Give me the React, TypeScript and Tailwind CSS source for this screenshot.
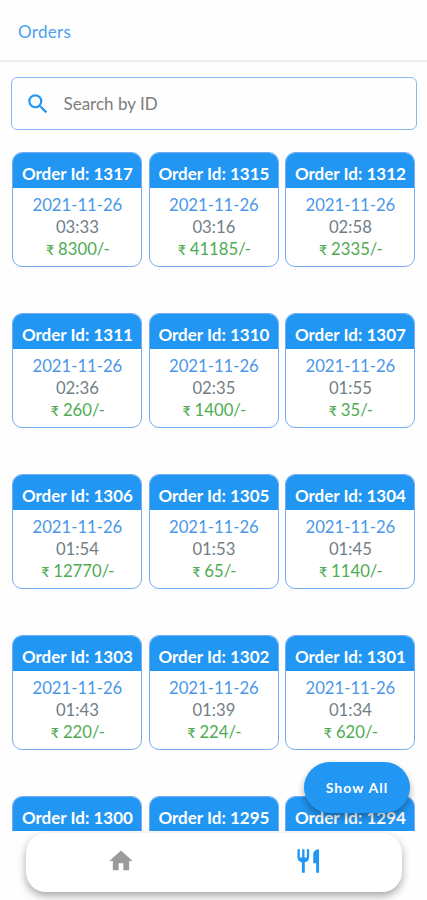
import React from "react";

type Order = { id: number; time?: string; amount?: number };

const orders: Order[] = [
  { id: 1317, time: "03:33", amount: 8300 },
  { id: 1315, time: "03:16", amount: 41185 },
  { id: 1312, time: "02:58", amount: 2335 },
  { id: 1311, time: "02:36", amount: 260 },
  { id: 1310, time: "02:35", amount: 1400 },
  { id: 1307, time: "01:55", amount: 35 },
  { id: 1306, time: "01:54", amount: 12770 },
  { id: 1305, time: "01:53", amount: 65 },
  { id: 1304, time: "01:45", amount: 1140 },
  { id: 1303, time: "01:43", amount: 220 },
  { id: 1302, time: "01:39", amount: 224 },
  { id: 1301, time: "01:34", amount: 620 },
  { id: 1300 },
  { id: 1295 },
  { id: 1294 },
];

function OrderCard({ order }: { order: Order }) {
  return (
    <article className="h-[115px] overflow-hidden rounded-[10px] border border-[#76acf3] bg-white text-center text-[16.7px] leading-[22px]">
      <h2 className="-mx-px -mt-px h-9 bg-[#2196f3] pt-[11px] text-[17px] font-bold whitespace-nowrap text-white">
        Order Id: {order.id}
      </h2>
      {order.time && (
        <div className="pt-[5.5px]">
          <p className="text-[#4a97e8]">2021-11-26</p>
          <p className="text-[#727e86]">{order.time}</p>
          <p className="text-[#4fab52]">
            <span className="text-[14px] leading-none font-medium">₹</span>
            <span className="ml-1">{order.amount}</span>
            <span className="tracking-[-0.9px]">/-</span>
          </p>
        </div>
      )}
    </article>
  );
}

export default function App() {
  return (
    <div className="relative flex h-[900px] w-full flex-col overflow-hidden bg-[#fefefe] font-['Lato','Noto_Sans',sans-serif]">
      <header className="flex h-[62px] shrink-0 items-center border-b-2 border-[#eeeeef] pt-1 pl-[18px] text-[17px] tracking-[0.3px] text-[#4f9ff0]">
        Orders
      </header>
      <main className="h-[769px] shrink-0 overflow-hidden px-3 pt-[15px]">
        <label className="-ml-px flex h-[53px] w-[406px] items-center rounded-md border-[1.5px] border-[#8ab8f2] pl-[13px]">
          <svg viewBox="0 0 24 24" className="h-[26px] w-[26px] fill-[#2196f3]" aria-hidden="true">
            <path d="M15.5 14h-.79l-.28-.27A6.47 6.47 0 0 0 16 9.5 6.5 6.5 0 1 0 9.5 16c1.61 0 3.09-.59 4.23-1.57l.27.28v.79l5 4.99L20.49 19l-4.99-5zm-6 0A4.5 4.5 0 1 1 14 9.5 4.49 4.49 0 0 1 9.500 14z" />
          </svg>
          <input
            className="ml-[12.5px] w-60 text-[17px] outline-none placeholder:text-[#7c7c7c]"
            placeholder="Search by ID"
          />
        </label>
        <section className="mt-[22.4px] ml-[0.4px] grid grid-cols-[130px_130px_130px] gap-x-[6.5px] gap-y-[46px]">
          {orders.map((order) => (
            <OrderCard key={order.id} order={order} />
          ))}
        </section>
      </main>
      <nav className="mt-[2px] ml-[26px] flex h-[59px] w-[376px] shrink-0 rounded-[20px] bg-white pb-[3px] shadow-[0_4px_8px_rgba(0,0,0,0.34)]">
        <button className="flex flex-1 items-center justify-center pl-px" aria-label="Home">
          <svg viewBox="0 0 24 24" className="h-7 w-7 fill-[#9b9b9b]">
            <path d="M10 20v-6h4v6h5v-8h3L12 3 2 12h3v8z" />
          </svg>
        </button>
        <button className="flex flex-1 items-center justify-center" aria-label="Orders">
          <svg viewBox="0 0 24 24" className="h-7 w-7 fill-[#2196f3]">
            <path d="M11 9H9V2H7v7H5V2H3v7c0 2.12 1.66 3.84 3.75 3.97V22h2.5v-9.03C11.34 12.84 13 11.12 13 9V2h-2v7zM16.500 6v8h2.500v8h2.500V2c-2.800 0-5 2-5 4z" />
          </svg>
        </button>
      </nav>
      <button className="absolute top-[761.5px] right-[17px] h-[51px] w-[106px] rounded-[26px] bg-[#2196f3] text-[14px] font-bold tracking-[1.1px] text-white shadow-[0_4px_7px_rgba(0,0,0,0.32)]">
        Show All
      </button>
    </div>
  );
}
